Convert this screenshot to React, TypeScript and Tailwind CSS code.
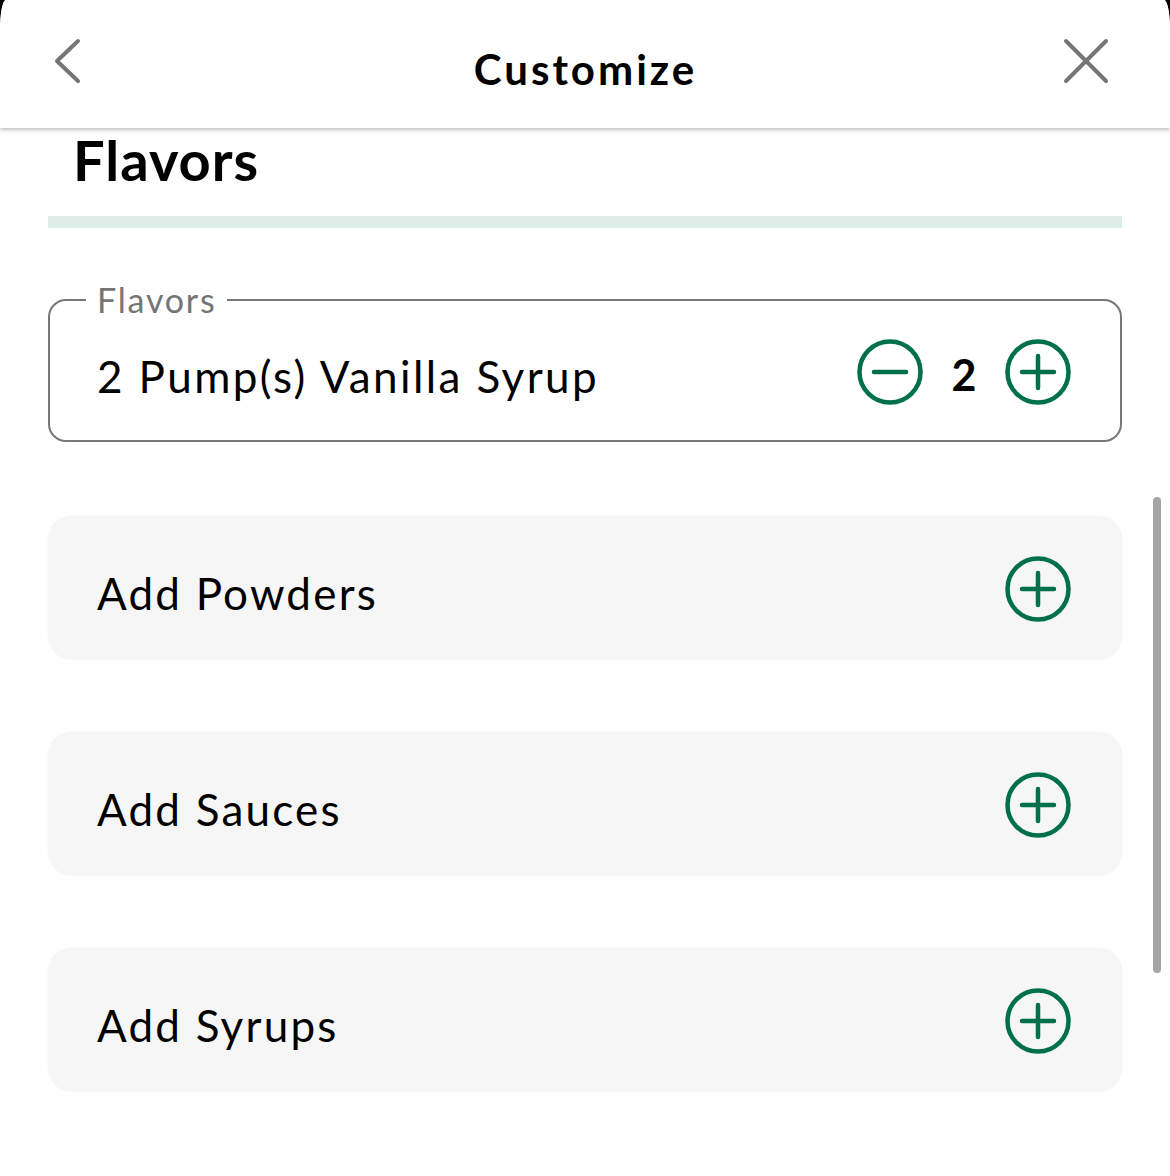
import type { ReactNode } from 'react';

const GREEN = '#00704a';

function PlusCircle() {
  return (
    <svg className="w-[66px] h-[66px] shrink-0" viewBox="0 0 66 66" fill="none" stroke={GREEN} strokeWidth={4.5} strokeLinecap="round">
      <circle cx="33" cy="33" r="30.5" />
      <path d="M17 33h32M33 17v32" />
    </svg>
  );
}

function MinusCircle() {
  return (
    <svg className="w-[66px] h-[66px] shrink-0" viewBox="0 0 66 66" fill="none" stroke={GREEN} strokeWidth={4.5} strokeLinecap="round">
      <circle cx="33" cy="33" r="30.5" />
      <path d="M17 33h32" />
    </svg>
  );
}

function AddCard({ children }: { children: ReactNode }) {
  return (
    <div className="mx-[48px] h-[143px] rounded-[24px] bg-[#f6f6f6] shadow-[0_-1px_2px_rgba(0,0,0,0.06)] flex items-center justify-between pl-[49px] pr-[51px]">
      <span className="text-[44px] tracking-[2.2px] text-black mt-[8px]">{children}</span>
      <PlusCircle />
    </div>
  );
}

export default function App() {
  return (
    <div className="bg-black min-h-screen" style={{ fontFamily: 'Lato, "Noto Sans", sans-serif' }}>
      <div className="relative bg-white min-h-[1176px] rounded-tl-[6px_30px] rounded-tr-[6px_30px] overflow-hidden">
        {/* Header */}
        <header className="relative z-10 h-[128px] bg-white shadow-[0_2px_4px_rgba(0,0,0,0.25)] flex items-center justify-between pl-[52px] pr-[61px]">
          <svg className="w-[32px] h-[48px] -mt-[6px]" viewBox="0 0 32 48" fill="none" stroke="#757575" strokeWidth={4} strokeLinecap="round" strokeLinejoin="round">
            <path d="M26 4L5 24l21 20" />
          </svg>
          <h1 className="text-[42px] font-bold text-black tracking-[3px] mt-[10px] ml-[24px]">Customize</h1>
          <svg className="w-[46px] h-[46px] -mt-[6px]" viewBox="0 0 46 46" fill="none" stroke="#757575" strokeWidth={4} strokeLinecap="round">
            <path d="M3 3l40 40M43 3L3 43" />
          </svg>
        </header>

        {/* Section title */}
        <h2 className="pl-[73px] text-[56px] leading-[64px] font-bold tracking-[1px] text-black">Flavors</h2>
        <div className="mx-[48px] mt-[24px] h-[12px] bg-[#dbede6]" />

        {/* Selected flavor */}
        <fieldset className="mx-[48px] mt-[52px] border-2 border-[#777777] rounded-[18px] pl-[47px] pr-[49px] pt-[19px] pb-[35px]">
          <legend className="-ml-[11px] px-[11px] text-[34px] leading-[40px] tracking-[1.8px] text-[#757575]">Flavors</legend>
          <div className="h-[66px] flex items-center justify-between">
            <span className="text-[44px] tracking-[2.4px] text-black mt-[8px]">2 Pump(s) Vanilla Syrup</span>
            <div className="flex items-center">
              <MinusCircle />
              <span className="w-[82px] text-center text-[43px] font-bold text-black mt-[6px]">2</span>
              <PlusCircle />
            </div>
          </div>
        </fieldset>

        <div className="mt-[75px] flex flex-col gap-[73px]">
          <AddCard>Add Powders</AddCard>
          <AddCard>Add Sauces</AddCard>
          <AddCard>Add Syrups</AddCard>
        </div>

        {/* Scroll indicator */}
        <div className="absolute left-[1153px] top-[497px] w-[8px] h-[476px] rounded-full bg-[#a5a5a5]" />
      </div>
    </div>
  );
}
